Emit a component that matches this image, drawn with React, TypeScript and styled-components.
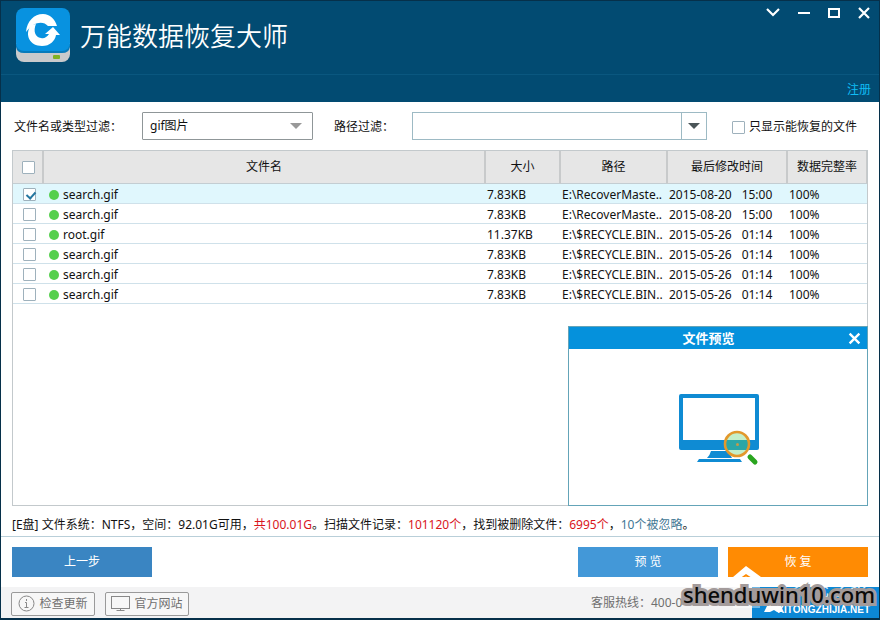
import React, { useState } from "react";
import styled, { createGlobalStyle } from "styled-components";

const GlobalStyle = createGlobalStyle`
  * { box-sizing: border-box; }
  body {
    margin: 0;
    background: #fff;
    color: #111;
    font: 12px/20px "Noto Sans", "Noto Sans CJK SC", sans-serif;
  }
  button, input, select { font: inherit; color: inherit; }
`;

const Window = styled.div`
  position: relative;
  display: flex;
  flex-direction: column;
  min-height: 100vh;
  background: #fff;
  border: 1px solid #06304a;
  border-bottom-width: 2px;
  overflow: hidden;
`;

const Header = styled.header`
  background: #024b72;
`;

const TitleBar = styled.div`
  display: flex;
  align-items: flex-start;
  height: 74px;
  padding: 7px 8px 0 15px;
  border-bottom: 1px solid #0a577f;
`;

const Title = styled.h1`
  flex: 1;
  margin: 7px 0 0 10px;
  color: #fff;
  font: 350 26px/40px "Noto Sans CJK SC", sans-serif;
`;

const WindowControls = styled.div`
  display: flex;
  gap: 15px;
  margin-top: -4px;
`;

const IconButton = styled.button`
  display: flex;
  padding: 0;
  border: 0;
  background: none;
  color: #fff;
  cursor: pointer;
`;

const RegisterBar = styled.div`
  display: flex;
  justify-content: flex-end;
  align-items: center;
  height: 27px;
  padding: 2px 8px 0;
`;

const RegisterLink = styled.a`
  color: #10bdf5;
  text-decoration: none;
`;

const Filters = styled.div`
  display: flex;
  align-items: center;
  padding: 10px 12px 10px 13px;
`;

const FilterLabel = styled.label<{ $width: number }>`
  flex: 0 0 ${(p) => p.$width}px;
  padding-top: 2px;
  white-space: nowrap;
`;

const SelectBox = styled.div`
  position: relative;
  display: flex;
  flex: 0 0 171px;
  margin-right: 21px;
`;

const TypeSelect = styled.select`
  appearance: none;
  width: 100%;
  height: 28px;
  padding: 0 24px 0 7px;
  border: 1px solid #8f9698;
  border-radius: 1px;
  background: #fff;
`;

const SelectArrow = styled.svg`
  position: absolute;
  top: 11px;
  right: 11px;
  pointer-events: none;
`;

const PathBox = styled.div`
  display: flex;
  flex: 1;
  height: 28px;
  min-width: 0;
  margin-right: 25px;
  border: 1px solid #9dbac4;
`;

const PathInput = styled.input`
  flex: 1;
  min-width: 0;
  padding: 0 6px;
  border: 0;
  outline: 0;
`;

const DropButton = styled.button`
  display: flex;
  align-items: center;
  justify-content: center;
  width: 25px;
  padding: 0;
  border: 0;
  border-left: 1px solid #9dbac4;
  background: #fff;
`;

const CheckLabel = styled.label`
  display: flex;
  align-items: center;
  gap: 4px;
  padding: 2px 10px 0 0;
  white-space: nowrap;
`;

const Check = styled.input.attrs({ type: "checkbox" })`
  appearance: none;
  position: relative;
  display: block;
  flex: none;
  width: 13px;
  height: 13px;
  margin: 0;
  border: 1px solid #9eb1bc;
  border-radius: 1px;
  background: #fff;
  &:checked::after {
    content: "";
    position: absolute;
    left: 4px;
    top: 1px;
    width: 4px;
    height: 7px;
    border: solid #2577a0;
    border-width: 0 2px 2px 0;
    transform: rotate(42deg);
  }
`;

const Results = styled.main`
  position: relative;
  flex: 1;
  min-height: 356px;
  margin: 0 11px;
  border: 1px solid #c3c9cc;
`;

const FileTable = styled.table`
  width: 100%;
  table-layout: fixed;
  border-spacing: 0;
`;

const HeadCell = styled.th`
  height: 33px;
  padding: 0;
  border-right: 2px solid #c8cacb;
  border-bottom: 1px solid #c3cdd2;
  background: #e6e6e6;
  font-weight: 400;
  white-space: nowrap;
  &:last-child { border-right-width: 1px; }
  > input { margin-left: 9px; }
`;

const FileRow = styled.tr<{ $selected: boolean }>`
  background: ${(p) => (p.$selected ? "#e0f7fd" : "#fff")};
`;

const Cell = styled.td`
  height: 20px;
  padding: 2px 0 0 1px;
  border-bottom: 1px solid #cfe1ea;
  line-height: 17px;
  white-space: pre;
  > input { margin-left: 9px; }
`;

const FileName = styled.span`
  display: flex;
  align-items: center;
  gap: 4px;
  padding-left: 4px;
`;

const Moment = styled.span`
  display: flex;
  gap: 10px;
`;

const Dot = styled.span`
  width: 10px;
  height: 10px;
  border-radius: 50%;
  background: #55cf4d;
`;

const Preview = styled.section`
  position: absolute;
  right: -1px;
  bottom: -1px;
  display: flex;
  flex-direction: column;
  width: 300px;
  height: 180px;
  border: 1px solid #64a4b8;
  background: #fff;
`;

const PreviewHead = styled.div`
  display: flex;
  align-items: center;
  height: 22px;
  padding: 0 6px 0 0;
  background: #0591dc;
  color: #fff;
`;

const PreviewTitle = styled.h2`
  flex: 1;
  margin: 0;
  font: 700 13px/20px "Noto Sans CJK SC", sans-serif;
  text-align: center;
`;

const PreviewBody = styled.div`
  display: flex;
  flex: 1;
  align-items: center;
  justify-content: center;
  padding: 6px 0 0 2px;
`;

const Status = styled.p`
  margin: 0;
  padding: 9px 11px 1px;
  border-bottom: 1px solid #b9cfd9;
  white-space: nowrap;
`;

const Em = styled.span<{ $tone: "red" | "blue" }>`
  color: ${(p) => (p.$tone === "red" ? "#d9151b" : "#3f7794")};
`;

const Actions = styled.div`
  display: flex;
  gap: 10px;
  padding: 10px 11px;
`;

const ActionButton = styled.button<{ $color: string; $first?: boolean }>`
  width: 140px;
  height: 30px;
  margin-right: ${(p) => (p.$first ? "auto" : "0")};
  padding: 0;
  border: 0;
  background: ${(p) => p.$color};
  color: #fff;
  cursor: pointer;
`;

const Footer = styled.footer`
  display: flex;
  align-items: center;
  gap: 10px;
  height: 31px;
  padding-left: 10px;
  background: #f3f3f4;
  color: #6f6f6f;
`;

const FootButton = styled.button`
  display: flex;
  align-items: center;
  justify-content: center;
  gap: 4px;
  width: 84px;
  height: 24px;
  margin-top: 2px;
  padding: 0;
  border: 1px solid #9a9a9a;
  border-radius: 2px;
  background: #f7f7f7;
  white-space: nowrap;
`;

const Hotline = styled.span`
  width: 161px;
  margin-left: auto;
`;

const SiteBlock = styled.div`
  width: 127px;
  margin-left: -10px;
  height: 31px;
  background: #0c88d6;
`;

const HouseMark = styled.svg`
  position: absolute;
  right: 92px;
  bottom: 2px;
`;

const SiteName = styled.span`
  position: absolute;
  right: 10px;
  bottom: 16px;
  color: #fff;
  font: 400 20px/28px "Noto Sans CJK SC", sans-serif;
  opacity: 0.85;
`;

const SiteUrl = styled.span`
  position: absolute;
  right: 9px;
  bottom: 2px;
  color: #fff;
  font: 700 10px/12px "Liberation Sans", sans-serif;
`;

const Stamp = styled.span`
  position: absolute;
  right: 4px;
  bottom: 6px;
  color: #0a0a0a;
  font: 500 22px/36px "Noto Sans", sans-serif;
  -webkit-text-stroke: 6px #a39b9b;
  paint-order: stroke fill;
  pointer-events: none;
`;

const DiskLogo = () => (
  <svg width="54" height="54" viewBox="0 0 54 54" aria-hidden="true">
    <rect y="10" width="54" height="44" rx="8" fill="#c9cacc" />
    <path d="M0 36h54v3q-1 6-8 6H8q-7 0-8-6z" fill="#087bbb" />
    <rect width="54" height="43" rx="8" fill="#0892e0" />
    <path
      d="M10 24C11 13 18 6 27 6C34 6 39 11 41 18H32C27 12 17 14 10 24z"
      fill="#fff"
    />
    <path
      d="M15 17C8 27 14 38 26 38C34 38 39 33 40 27H44L37 19L29 26H33C31 29 28 31 25 30C19 29 17 23 20 16z"
      fill="#fff"
    />
    <rect x="37" y="47" width="7" height="4" rx="1" fill="#7fb125" />
  </svg>
);

const MonitorArt = () => (
  <svg width="80" height="72" viewBox="0 0 80 72" aria-hidden="true">
    <path
      fillRule="evenodd"
      d="M2 0h76q2 0 2 2v52q0 2-2 2H2q-2 0-2-2V2q0-2 2-2zM4 4v42h72V4z"
      fill="#0f8bd3"
    />
    <path d="M32 57h17l4 7H28q3-3 4-7zM20 65h41l2 3H18z" fill="#0f8bd3" />
    <circle cx="58" cy="50" r="12" fill="#c4efc9" />
    <path d="M47 46h23a12 12 0 0 1-2 10H48a12 12 0 0 1-1-10z" fill="#2aa6a8" />
    <circle cx="58" cy="50" r="12" fill="none" stroke="#e2982c" strokeWidth="2.6" />
    <circle cx="58.500" cy="50.500" r="1.500" fill="#c59a4a" />
    <path d="M71 63l5 5" stroke="#2aa51f" strokeWidth="5" strokeLinecap="round" />
  </svg>
);

const Cross = ({ size }: { size: number }) => (
  <svg width={size} height={size} viewBox="0 0 12 12" aria-hidden="true">
    <path d="M1.500 1.500l9 9M10.500 1.500l-9 9" stroke="currentColor" strokeWidth="2.200" />
  </svg>
);

const files = [
  ["search.gif", "7.83KB", "E:\\RecoverMaste..", "2015-08-20", "15:00"],
  ["search.gif", "7.83KB", "E:\\RecoverMaste..", "2015-08-20", "15:00"],
  ["root.gif", "11.37KB", "E:\\$RECYCLE.BIN..", "2015-05-26", "01:14"],
  ["search.gif", "7.83KB", "E:\\$RECYCLE.BIN..", "2015-05-26", "01:14"],
  ["search.gif", "7.83KB", "E:\\$RECYCLE.BIN..", "2015-05-26", "01:14"],
  ["search.gif", "7.83KB", "E:\\$RECYCLE.BIN..", "2015-05-26", "01:14"],
];

export default function App() {
  const [checked, setChecked] = useState(files.map((_, i) => i === 0));
  const [previewOpen, setPreviewOpen] = useState(true);
  const toggle = (row: number) => setChecked(checked.map((v, i) => (i === row ? !v : v)));

  return (
    <>
      <GlobalStyle />
      <Window>
        <Header>
          <TitleBar>
            <DiskLogo />
            <Title>万能数据恢复大师</Title>
            <WindowControls>
              <IconButton aria-label="菜单">
                <svg width="16" height="16" viewBox="0 0 16 16">
                  <path d="M1 5l6 6 6-6" fill="none" stroke="currentColor" strokeWidth="2.200" />
                </svg>
              </IconButton>
              <IconButton aria-label="最小化">
                <svg width="16" height="16" viewBox="0 0 16 16">
                  <path d="M1 9h12" stroke="currentColor" strokeWidth="2" />
                </svg>
              </IconButton>
              <IconButton aria-label="最大化">
                <svg width="14" height="16" viewBox="0 0 14 16">
                  <rect x="1" y="5" width="10" height="8" fill="none" stroke="currentColor" strokeWidth="2" />
                </svg>
              </IconButton>
              <IconButton aria-label="关闭">
                <svg width="14" height="16" viewBox="0 0 14 16">
                  <path d="M2 4l10 10M12 4L2 14" stroke="currentColor" strokeWidth="2.200" />
                </svg>
              </IconButton>
            </WindowControls>
          </TitleBar>
          <RegisterBar>
            <RegisterLink href="#register">注册</RegisterLink>
          </RegisterBar>
        </Header>

        <Filters>
          <FilterLabel $width={128} htmlFor="type">文件名或类型过滤：</FilterLabel>
          <SelectBox>
            <TypeSelect id="type">
              <option>gif图片</option>
            </TypeSelect>
            <SelectArrow width="12" height="6" viewBox="0 0 12 6">
              <path d="M0 0h12L6 6z" fill="#999" />
            </SelectArrow>
          </SelectBox>
          <FilterLabel $width={78} htmlFor="path">路径过滤：</FilterLabel>
          <PathBox>
            <PathInput id="path" type="text" />
            <DropButton aria-label="选择路径">
              <svg width="12" height="6" viewBox="0 0 12 6">
                <path d="M0 0h12L6 6z" fill="#4b5558" />
              </svg>
            </DropButton>
          </PathBox>
          <CheckLabel>
            <Check />
            只显示能恢复的文件
          </CheckLabel>
        </Filters>

        <Results>
          <FileTable>
            <colgroup>
              <col width="31" />
              <col />
              <col width="75" />
              <col width="107" />
              <col width="120" />
              <col width="79" />
            </colgroup>
            <thead>
              <tr>
                <HeadCell>
                  <Check
                    aria-label="全选"
                    checked={checked.every(Boolean)}
                    onChange={(e) => setChecked(files.map(() => e.target.checked))}
                  />
                </HeadCell>
                <HeadCell>文件名</HeadCell>
                <HeadCell>大小</HeadCell>
                <HeadCell>路径</HeadCell>
                <HeadCell>最后修改时间</HeadCell>
                <HeadCell>数据完整率</HeadCell>
              </tr>
            </thead>
            <tbody>
              {files.map(([name, size, path, date, time], i) => (
                <FileRow key={i} $selected={checked[i]}>
                  <Cell>
                    <Check aria-label={name} checked={checked[i]} onChange={() => toggle(i)} />
                  </Cell>
                  <Cell>
                    <FileName>
                      <Dot />
                      {name}
                    </FileName>
                  </Cell>
                  <Cell>{size}</Cell>
                  <Cell>{path}</Cell>
                  <Cell>
                    <Moment>
                      <span>{date}</span>
                      <span>{time}</span>
                    </Moment>
                  </Cell>
                  <Cell>100%</Cell>
                </FileRow>
              ))}
            </tbody>
          </FileTable>
          {previewOpen && (
            <Preview>
              <PreviewHead>
                <PreviewTitle>文件预览</PreviewTitle>
                <IconButton aria-label="关闭预览" onClick={() => setPreviewOpen(false)}>
                  <Cross size={13} />
                </IconButton>
              </PreviewHead>
              <PreviewBody>
                <MonitorArt />
              </PreviewBody>
            </Preview>
          )}
        </Results>

        <Status>
          [E盘] 文件系统：NTFS，空间：92.01G可用，<Em $tone="red">共100.01G</Em>。扫描文件记录：
          <Em $tone="red">101120个</Em>，找到被删除文件：<Em $tone="red">6995个</Em>，
          <Em $tone="blue">10个被忽略</Em>。
        </Status>

        <Actions>
          <ActionButton $color="#3a85c2" $first>上一步</ActionButton>
          <ActionButton $color="#4398d8">预 览</ActionButton>
          <ActionButton $color="#ff8b03">恢 复</ActionButton>
        </Actions>

        <Footer>
          <FootButton>
            <svg width="17" height="17" viewBox="0 0 17 17" fill="none" stroke="#888">
              <circle cx="8.500" cy="8.500" r="7.500" />
              <path d="M8.500 4v2M7 7.500h1.500V12M6.500 12.500h4" />
            </svg>
            检查更新
          </FootButton>
          <FootButton>
            <svg width="19" height="17" viewBox="0 0 19 17" fill="none" stroke="#888">
              <rect x="0.500" y="1.500" width="18" height="12" />
              <path d="M9.500 13.500v2M5.500 15.500h8" />
            </svg>
            官方网站
          </FootButton>
          <Hotline>客服热线：400-0</Hotline>
          <SiteBlock />
        </Footer>

        <SiteName>系统之家</SiteName>
        <HouseMark width="62" height="52" viewBox="0 0 62 52" aria-hidden="true">
          <path d="M1 19L21 2l15 11v7L21 10 7 20z" fill="#fff" />
          <path d="M8 21l13-9 14 10v22H8z" fill="#fff" fillOpacity="0.4" />
          <path d="M40 38l9-4 10 4-3 3 2 7h-6l-3-2-4 2h-6l3-6z" fill="#fff" />
        </HouseMark>
        <SiteUrl>XITONGZHIJIA.NET</SiteUrl>
        <Stamp>shenduwin10.com</Stamp>
      </Window>
    </>
  );
}
